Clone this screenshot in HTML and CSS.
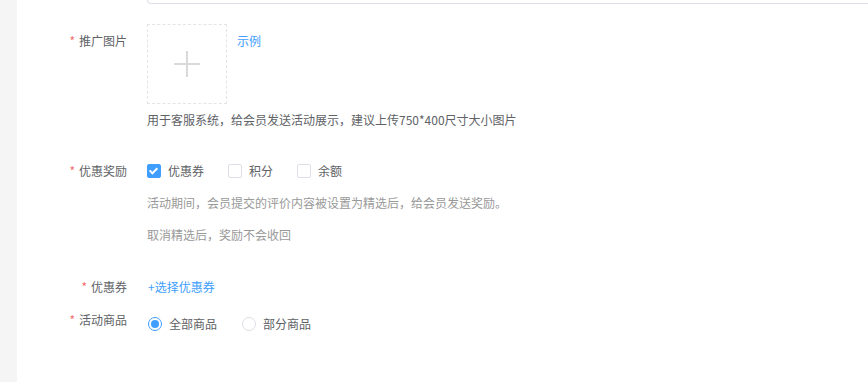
FILE: index.html
```html
<!DOCTYPE html>
<html lang="zh-CN">
<head>
    <meta charset="UTF-8">
    <title>活动设置</title>
    <link rel="stylesheet" href="styles.css">
</head>
<body>
    <div class="page">
        <div class="sidebar"></div>
        <div class="main">
            <div class="prev-input"></div>

            <div class="form-item item-pic">
                <label class="form-label"><span class="req">*</span>推广图片</label>
                <div class="form-content">
                    <div class="upload-row">
                        <div class="upload-box"><span class="plus"></span></div>
                        <a class="link sample">示例</a>
                    </div>
                    <div class="help">用于客服系统，给会员发送活动展示，建议上传750*400尺寸大小图片</div>
                </div>
            </div>

            <div class="form-item item-reward">
                <label class="form-label"><span class="req">*</span>优惠奖励</label>
                <div class="form-content">
                    <div class="options">
                        <span class="check-option"><span class="checkbox checked"></span>优惠券</span>
                        <span class="check-option"><span class="checkbox"></span>积分</span>
                        <span class="check-option"><span class="checkbox"></span>余额</span>
                    </div>
                    <div class="tip">活动期间，会员提交的评价内容被设置为精选后，给会员发送奖励。</div>
                    <div class="tip">取消精选后，奖励不会收回</div>
                </div>
            </div>

            <div class="form-item item-coupon">
                <label class="form-label"><span class="req">*</span>优惠券</label>
                <div class="form-content">
                    <a class="link">+选择优惠券</a>
                </div>
            </div>

            <div class="form-item item-goods">
                <label class="form-label"><span class="req">*</span>活动商品</label>
                <div class="form-content">
                    <div class="options">
                        <span class="radio-option"><span class="radio checked"></span>全部商品</span>
                        <span class="radio-option"><span class="radio"></span>部分商品</span>
                    </div>
                </div>
            </div>
        </div>
    </div>
</body>
</html>
```
FILE: styles.css
```css
html, body {
    margin: 0;
    padding: 0;
    background-color: white;
    overflow: hidden;
}

body {
    font-family: "Noto Sans CJK SC", "Liberation Sans", sans-serif;
    font-size: 12px;
    color: #606266;
}

.page {
    display: flex;
    height: 382px;
}

.sidebar {
    width: 17px;
    flex-shrink: 0;
    background-color: #f5f5f5;
}

.main {
    flex: 1;
    min-width: 0;
}

.prev-input {
    height: 3px;
    margin-left: 130px;
    margin-right: -10px;
    border: 1px solid #dcdfe6;
    border-top: none;
    border-radius: 0 0 4px 4px;
}

.form-item {
    display: flex;
}

.form-label {
    width: 130px;
    flex-shrink: 0;
    padding-right: 20px;
    box-sizing: border-box;
    text-align: right;
    line-height: 32px;
    color: #606266;
}

.req {
    color: #f56c6c;
    margin-right: 4px;
}

.form-content {
    flex: 1;
    line-height: 32px;
}

.link {
    color: #409eff;
    cursor: pointer;
}

/* 推广图片 */
.item-pic {
    margin-top: 20px;
}

.item-pic .form-label {
    line-height: 34px;
}

.upload-row {
    display: flex;
    align-items: flex-start;
}

.upload-box {
    width: 78px;
    height: 78px;
    border: 1px dashed #e4e4e4;
    position: relative;
}

.plus::before,
.plus::after {
    content: "";
    position: absolute;
    background-color: #d9d9d9;
    left: 50%;
    top: 50%;
}

.plus::before {
    width: 26px;
    height: 2px;
    margin: -1px 0 0 -13px;
}

.plus::after {
    width: 2px;
    height: 26px;
    margin: -13px 0 0 -1px;
}

.sample {
    margin-left: 10px;
    line-height: 34px;
}

.help {
    margin-top: 6px;
    line-height: 20px;
    color: #606266;
}

/* 优惠奖励 */
.item-reward {
    margin-top: 25px;
}

.options {
    display: flex;
    align-items: center;
    height: 32px;
}

.check-option {
    display: flex;
    align-items: center;
    margin-right: 24px;
    color: #606266;
}

.checkbox {
    width: 12px;
    height: 12px;
    border: 1px solid #dcdfe6;
    border-radius: 2px;
    margin-right: 7px;
    position: relative;
}

.checkbox.checked {
    background-color: #409eff;
    border-color: #409eff;
}

.checkbox.checked::after {
    content: "";
    position: absolute;
    left: 3px;
    top: 1px;
    width: 3px;
    height: 6px;
    border: 2px solid white;
    border-top: none;
    border-left: none;
    transform: rotate(45deg);
}

.tip {
    color: #999;
}

/* 优惠券 */
.item-coupon {
    margin-top: 20px;
}

.item-coupon .link {
    margin-left: 1px;
}

/* 活动商品 */
.item-goods {
    margin-top: 5px;
}

.item-goods .form-label {
    line-height: 24px;
}

.radio-option {
    display: flex;
    align-items: center;
    margin-right: 24px;
}

.radio {
    width: 12px;
    height: 12px;
    border: 1px solid #dcdfe6;
    border-radius: 50%;
    margin: 0 7px 0 1px;
    position: relative;
}

.radio.checked {
    border-color: #409eff;
}

.radio.checked::after {
    content: "";
    position: absolute;
    left: 2px;
    top: 2px;
    width: 8px;
    height: 8px;
    border-radius: 50%;
    background-color: #409eff;
}
```
